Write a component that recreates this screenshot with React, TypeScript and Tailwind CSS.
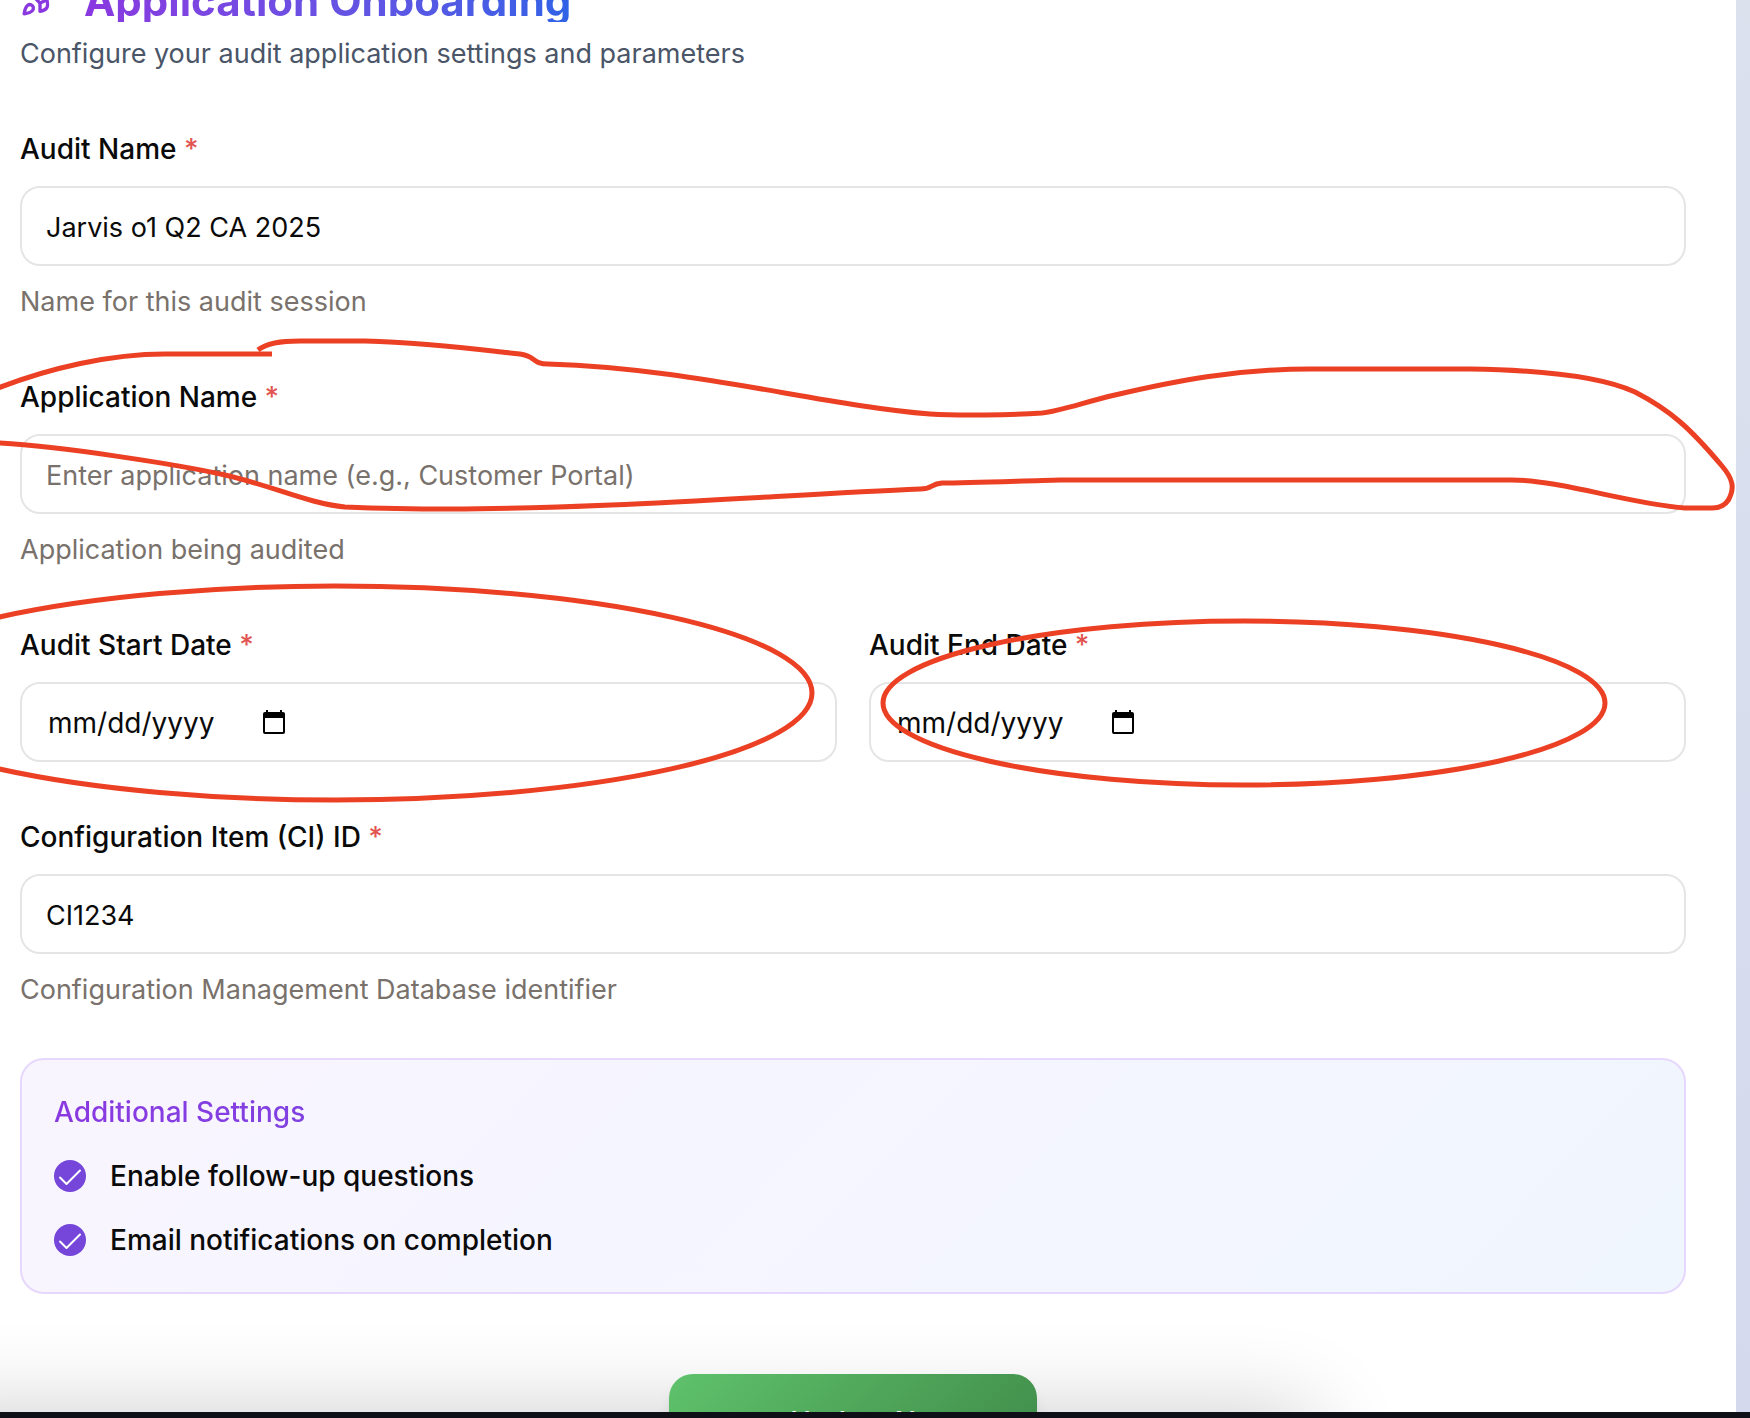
import { InputHTMLAttributes, ReactNode } from "react";
import { Check as CheckIcon, Rocket } from "lucide-react";

function Field({ id, label, help, children }: { id: string; label: string; help?: string; children: ReactNode }) {
  return (
    <div className="flex min-w-0 flex-1 flex-col gap-4">
      <label htmlFor={id} className="h-12 pt-[7px] font-medium">
        {label} <span className="text-[#e25450]">*</span>
      </label>
      <div className="flex">{children}</div>
      {help && <p className="text-[27px] text-[#79716b]">{help}</p>}
    </div>
  );
}

function TextInput(props: InputHTMLAttributes<HTMLInputElement>) {
  return (
    <input
      type="text"
      {...props}
      className="h-20 w-full rounded-[20px] border-2 border-[#e5e5e5] bg-white px-6 pt-0.5 text-[27px] placeholder:text-[#79716b] focus:outline-none"
    />
  );
}

function CalendarIcon() {
  return (
    <svg viewBox="0 0 24 26" className="h-[26px] w-6" aria-hidden="true">
      <path
        fillRule="evenodd"
        d="M4 1h2v2h12V1h2v2h1a2 2 0 0 1 2 2v18a2 2 0 0 1-2 2H3a2 2 0 0 1-2-2V5a2 2 0 0 1 2-2h1zM3 9v14h18V9z"
      />
    </svg>
  );
}

function DateInput({ id }: { id: string }) {
  return (
    <div className="flex h-20 w-full items-center rounded-[20px] border-2 border-[#e5e5e5] bg-white px-[26px]">
      <input id={id} type="text" placeholder="mm/dd/yyyy" className="w-[214px] pt-0.5 placeholder:text-[#0a0a0a] focus:outline-none" />
      <button type="button" aria-label="Open calendar">
        <CalendarIcon />
      </button>
    </div>
  );
}

function Setting({ id, label }: { id: string; label: string }) {
  return (
    <div className="flex items-center gap-6">
      <span className="grid size-8 place-items-center">
        <input id={id} type="checkbox" defaultChecked className="col-start-1 row-start-1 size-8 appearance-none rounded-full bg-[#7546d9]" />
        <svg viewBox="0 0 32 32" className="pointer-events-none col-start-1 row-start-1 size-8" fill="none" stroke="white" strokeWidth="2" strokeLinecap="round" strokeLinejoin="round" aria-hidden="true">
          <path d="M6 17.5 12.5 24 26 10.5" />
        </svg>
      </span>
      <label htmlFor={id} className="font-medium">{label}</label>
    </div>
  );
}

function Annotations() {
  return (
    <svg viewBox="0 0 1750 1418" className="pointer-events-none absolute top-0 left-0 z-20 h-[1418px] w-[1750px] max-w-none" fill="none" stroke="#ec4024" strokeWidth="5" aria-hidden="true">
      <path d="M-2 388 C50 368 110 354 165 354 H272" />
      <path d="M258 350 C267 343 280 341 300 341 H365 C430 343 475 349 520 354 C536 356 532 364 548 364 C690 368 820 405 930 414 C960 416 1010 415 1042 413 C1060 411 1085 402 1115 395 C1175 381 1235 369 1310 369 H1470 C1540 370 1600 376 1635 392 C1670 410 1690 428 1722 466 C1734 480 1733 488 1731 494 C1728 504 1721 508 1712 508 H1685 C1630 504 1560 480 1512 480 H1060 C1020 481 970 483 942 483 C930 484 933 489 920 489 C780 495 600 509 450 509 C410 509 370 508 345 507 C310 504 270 485 225 475 C180 465 60 446 -2 443" />
      <ellipse cx="335" cy="693" rx="477" ry="107" />
      <ellipse cx="1244" cy="703" rx="361" ry="82" />
    </svg>
  );
}

export default function App() {
  return (
    <div className="relative flex h-screen flex-col overflow-hidden bg-[#0f0f17] font-['Inter',sans-serif] text-[28px] leading-10 text-[#0a0a0a]">
      <div className="relative min-h-0 flex-1 overflow-hidden bg-linear-to-b from-[#dbe2ee] to-[#d4d9ed] pr-3.5">
        <main className="bg-white pr-[50px] pl-5">
          <header className="-mt-[26px]">
            <div className="flex h-12 items-center gap-6">
              <Rocket className="size-10 text-[#8a38e0]" />
              <h1 className="h-12 bg-linear-to-r from-[#8a38e0] to-[#2f62e6] bg-clip-text text-[42px] leading-[54px] font-bold text-transparent">
                Application Onboarding
              </h1>
            </div>
            <p className="mt-3 text-[27px] text-[#4a5568]">Configure your audit application settings and parameters</p>
          </header>

          <form className="mt-12 flex flex-col gap-12">
            <Field id="audit-name" label="Audit Name" help="Name for this audit session">
              <TextInput id="audit-name" defaultValue="Jarvis o1 Q2 CA 2025" />
            </Field>
            <Field id="app-name" label="Application Name" help="Application being audited">
              <TextInput id="app-name" placeholder="Enter application name (e.g., Customer Portal)" />
            </Field>
            <div className="flex gap-8">
              <Field id="start-date" label="Audit Start Date">
                <DateInput id="start-date" />
              </Field>
              <Field id="end-date" label="Audit End Date">
                <DateInput id="end-date" />
              </Field>
            </div>
            <Field id="ci-id" label="Configuration Item (CI) ID" help="Configuration Management Database identifier">
              <TextInput id="ci-id" defaultValue="CI1234" />
            </Field>

            <section className="flex flex-col gap-6 rounded-3xl border-2 border-[#e6d7fc] bg-linear-135 from-[#f9f5ff] to-[#f0f6fe] p-8">
              <h2 className="bg-linear-to-r from-[#8a38e0] to-[#2f62e6] bg-clip-text font-medium text-transparent">Additional Settings</h2>
              <Setting id="follow-up" label="Enable follow-up questions" />
              <Setting id="email-done" label="Email notifications on completion" />
            </section>

            <button
              type="button"
              className="relative z-10 mt-8 flex h-24 w-[368px] items-center justify-center gap-2 self-center rounded-3xl bg-linear-135 from-[#5fc26b] to-[#3f8a49] font-medium text-white shadow-lg"
            >
              <CheckIcon className="size-8" />
              Update Now
            </button>
          </form>
        </main>
        <div className="absolute top-full right-1/4 -left-24 h-40 shadow-[0_0_90px_0_rgba(0,0,0,0.2)]" />
      </div>
      <div className="h-1.5 shrink-0 bg-[#0f0f17]" />
      <Annotations />
    </div>
  );
}
